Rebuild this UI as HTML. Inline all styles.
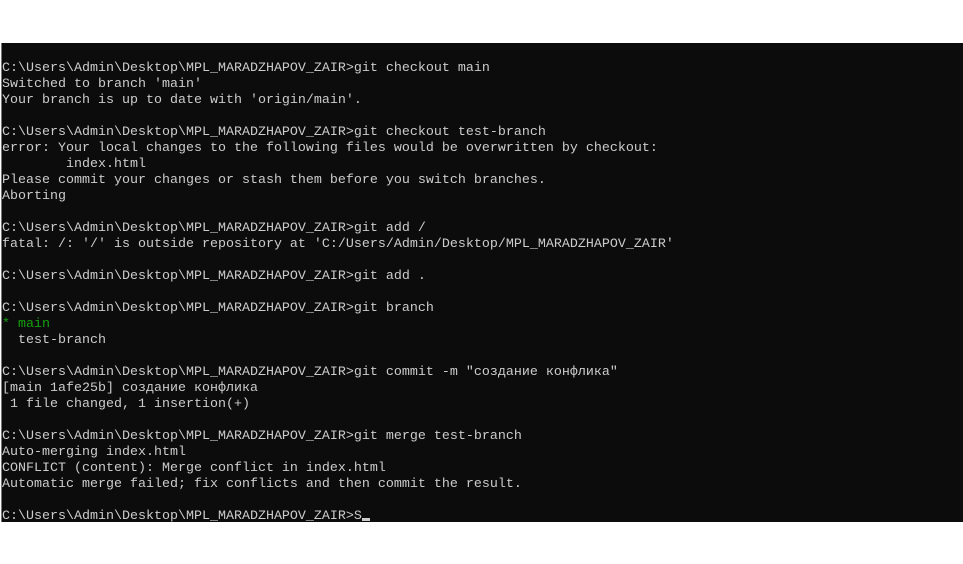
<!DOCTYPE html>
<html><head><meta charset="utf-8"><style>
html,body{margin:0;padding:0;background:#fff;width:963px;height:564px;overflow:hidden}
.t{position:absolute;left:1px;top:43px;width:962px;height:479px;background:#0c0c0c;border-left:1px solid #777}
pre{position:absolute;left:2px;top:61px;margin:0;font-family:"Liberation Mono","DejaVu Sans Mono",monospace;font-size:13.33px;line-height:16px;color:#cccccc;white-space:pre}
.g{color:#13a10e}
.c{display:inline-block;width:8px;height:3px;background:#ccc;vertical-align:-2px}
</style></head><body>
<div class="t"></div>
<pre>C:\Users\Admin\Desktop\MPL_MARADZHAPOV_ZAIR&gt;git checkout main
Switched to branch 'main'
Your branch is up to date with 'origin/main'.

C:\Users\Admin\Desktop\MPL_MARADZHAPOV_ZAIR&gt;git checkout test-branch
error: Your local changes to the following files would be overwritten by checkout:
        index.html
Please commit your changes or stash them before you switch branches.
Aborting

C:\Users\Admin\Desktop\MPL_MARADZHAPOV_ZAIR&gt;git add /
fatal: /: '/' is outside repository at 'C:/Users/Admin/Desktop/MPL_MARADZHAPOV_ZAIR'

C:\Users\Admin\Desktop\MPL_MARADZHAPOV_ZAIR&gt;git add .

C:\Users\Admin\Desktop\MPL_MARADZHAPOV_ZAIR&gt;git branch
<span class="g">* main</span>
  test-branch

C:\Users\Admin\Desktop\MPL_MARADZHAPOV_ZAIR&gt;git commit -m "создание конфлика"
[main 1afe25b] создание конфлика
 1 file changed, 1 insertion(+)

C:\Users\Admin\Desktop\MPL_MARADZHAPOV_ZAIR&gt;git merge test-branch
Auto-merging index.html
CONFLICT (content): Merge conflict in index.html
Automatic merge failed; fix conflicts and then commit the result.

C:\Users\Admin\Desktop\MPL_MARADZHAPOV_ZAIR&gt;S<span class="c"></span></pre>
</body></html>
